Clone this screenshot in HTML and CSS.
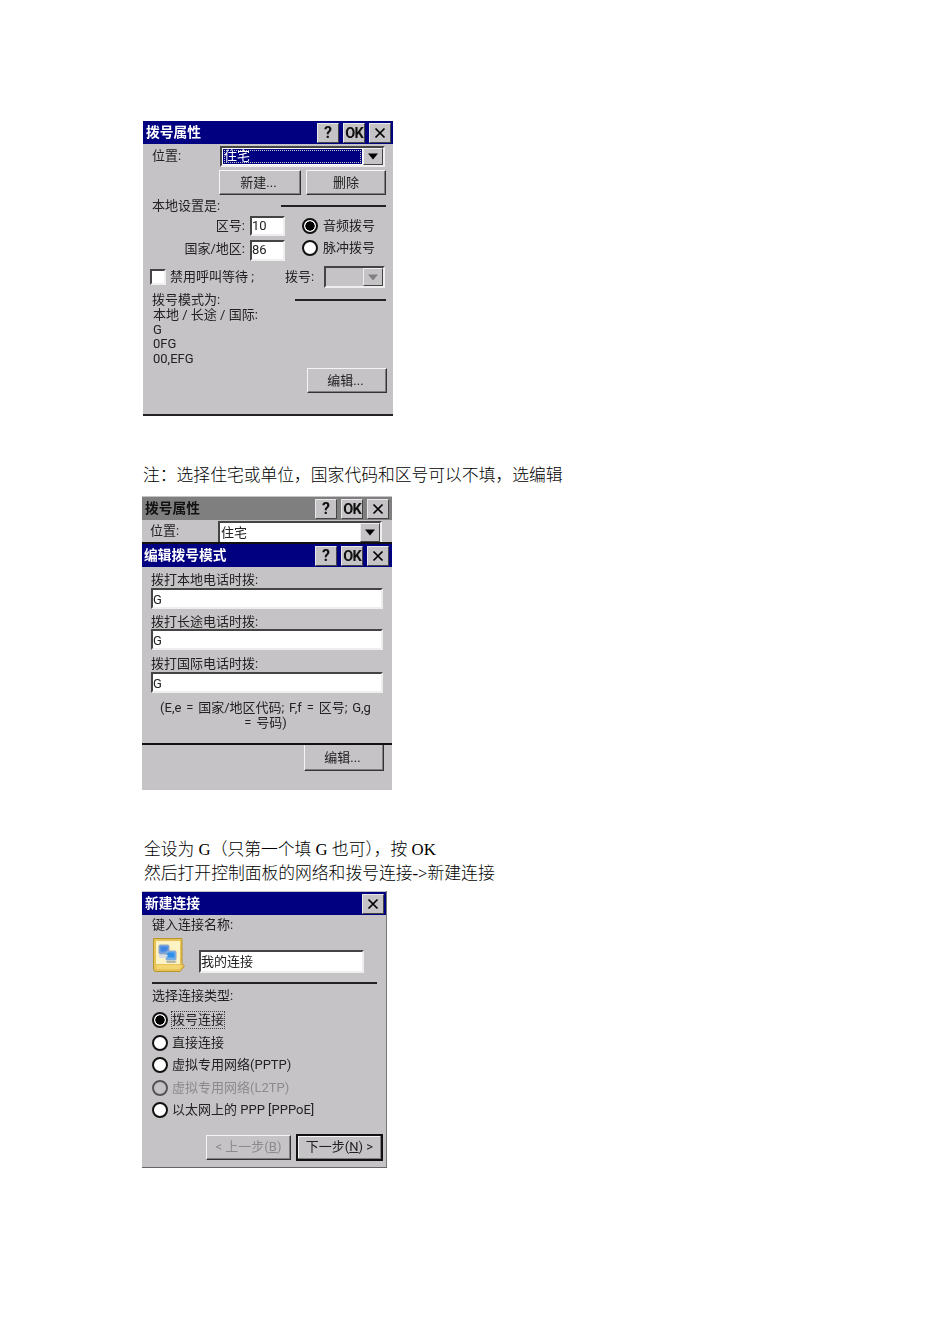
FILE: index.html
```html
<!DOCTYPE html>
<html lang="zh-CN">
<head>
<meta charset="utf-8">
<title>拨号属性</title>
<link rel="stylesheet" href="styles.css">
</head>
<body>
<svg class="defs" width="0" height="0" aria-hidden="true">
  <symbol id="x" viewBox="0 0 12 12"><path d="M1.5 1.5 10.5 10.5M10.5 1.5 1.5 10.5" fill="none" stroke="#000" stroke-width="1.7"/></symbol>
  <symbol id="down" viewBox="0 0 12 7"><path d="M1 0.5H11L6 6.5Z"/></symbol>
</svg>
<main class="page">

  <section class="dlg dlg-a">
    <header class="title navy">
      <span class="title-text">拨号属性</span>
      <span class="tb">?</span><span class="tb ok">OK</span><span class="tb"><svg class="ix"><use href="#x"/></svg></span>
    </header>
    <div class="a-r1">
      <span class="a-lab">位置:</span>
      <div class="combo a-combo">
        <span class="combo-val sel"><span class="sel-in">住宅</span></span>
        <span class="arrow"><svg class="dn"><use href="#down"/></svg></span>
      </div>
    </div>
    <div class="a-r2">
      <span class="btn a-new">新建...</span>
      <span class="btn a-del">删除</span>
    </div>
    <div class="a-head">
      <span>本地设置是:</span><i class="rule a-rule1"></i>
    </div>
    <div class="a-grid">
      <span class="a-right">区号:</span><span class="input a-in">10</span>
      <span class="radio on"></span><span>音频拨号</span>
      <span class="a-right a-up2">国家/地区:</span><span class="input a-in a-in2">86</span>
      <span class="radio a-up"></span><span class="a-up">脉冲拨号</span>
    </div>
    <div class="a-chk">
      <span class="check"></span><span class="a-chk-l">禁用呼叫等待 ;</span>
      <span class="a-dial">拨号:</span>
      <div class="combo a-combo2">
        <span class="combo-val dis"></span>
        <span class="arrow off"><svg class="dn"><use href="#down"/></svg></span>
      </div>
    </div>
    <div class="a-head a-head2">
      <span>拨号模式为:</span><i class="rule a-rule2"></i>
    </div>
    <div class="a-lines">
      <div>本地 / 长途 / 国际:</div><div>G</div><div>0FG</div><div>00,EFG</div>
    </div>
    <div class="a-foot"><span class="btn a-edit">编辑...</span></div>
  </section>

  <p class="para para-1">注&#xFF1A;选择住宅或单位&#xFF0C;国家代码和区号可以不填&#xFF0C;选编辑</p>

  <section class="dlg dlg-b">
    <header class="title gray b-title1">
      <span class="title-text">拨号属性</span>
      <span class="tb">?</span><span class="tb ok">OK</span><span class="tb"><svg class="ix"><use href="#x"/></svg></span>
    </header>
    <div class="b-r1">
      <span class="b-lab">位置:</span>
      <div class="combo b-combo">
        <span class="combo-val">住宅</span>
        <span class="arrow"><svg class="dn"><use href="#down"/></svg></span>
      </div>
    </div>
    <header class="title navy b-title2">
      <span class="title-text">编辑拨号模式</span>
      <span class="tb">?</span><span class="tb ok">OK</span><span class="tb"><svg class="ix"><use href="#x"/></svg></span>
    </header>
    <div class="b-form">
      <label class="b-l">拨打本地电话时拨:</label><span class="input b-in">G</span>
      <label class="b-l b-l2">拨打长途电话时拨:</label><span class="input b-in">G</span>
      <label class="b-l b-l3">拨打国际电话时拨:</label><span class="input b-in">G</span>
      <p class="b-note">(E,e = 国家/地区代码; F,f = 区号; G,g<br>= 号码)</p>
    </div>
    <div class="b-foot"><span class="btn b-edit">编辑...</span></div>
  </section>

  <div class="para para-2">
    <p>全设为 G&#xFF08;只第一个填 G 也可&#xFF09;&#xFF0C;按 OK</p>
    <p>然后打开控制面板的网络和拨号连接-&gt;新建连接</p>
  </div>

  <section class="dlg dlg-c">
    <header class="title navy c-title">
      <span class="title-text">新建连接</span>
      <span class="tb"><svg class="ix"><use href="#x"/></svg></span>
    </header>
    <div class="c-lab">键入连接名称:</div>
    <div class="c-name">
      <svg class="c-icon" viewBox="0 0 32 34">
        <path d="M0.5 0.5H29V26L31.5 28 27 33.5H3Q0.5 33.5 0.5 31Z" fill="#e8c458" stroke="#b8962e"/>
        <path d="M3 3H27V26H3Z" fill="#fdf3c4"/>
        <path d="M3 27H27L29 28.5 26 31H4Z" fill="#f3d672"/>
        <rect x="6" y="7" width="10" height="9" rx="1" fill="#6f9fe0" stroke="#8fa6c6"/>
        <rect x="7.500" y="8.500" width="7" height="5" fill="#3f86e4"/>
        <rect x="13" y="13" width="10" height="9" rx="1" fill="#6fb0ee" stroke="#8fa6c6"/>
        <rect x="14.500" y="14.500" width="7" height="5" fill="#2f8fe8"/>
        <path d="M5 17H15L13 20H7Z" fill="#d4dce6"/>
        <path d="M13 23H24L22 25H14Z" fill="#b4b8a8"/>
      </svg>
      <span class="input c-in">我的连接</span>
    </div>
    <i class="rule c-rule"></i>
    <div class="c-lab c-lab2">选择连接类型:</div>
    <div class="c-list">
      <div class="c-opt"><span class="radio on"></span><span class="focus">拨号连接</span></div>
      <div class="c-opt"><span class="radio"></span><span>直接连接</span></div>
      <div class="c-opt"><span class="radio"></span><span>虚拟专用网络(PPTP)</span></div>
      <div class="c-opt muted"><span class="radio dim"></span><span>虚拟专用网络(L2TP)</span></div>
      <div class="c-opt"><span class="radio"></span><span>以太网上的 PPP [PPPoE]</span></div>
    </div>
    <div class="c-foot">
      <span class="btn c-prev">&lt; 上一步(<u>B</u>)</span>
      <span class="btn c-next">下一步(<u>N</u>) &gt;</span>
    </div>
  </section>

</main>
</body>
</html>
```
FILE: styles.css
```css
* { box-sizing: border-box; }
html, body { margin: 0; background: #fff; }
.defs { position: absolute; }
.page { width: 950px; height: 1344px; padding: 121px 0 0 142px; overflow: hidden; }

p { margin: 0; }
.para { font: 300 16.8px/24px "Liberation Serif", "Noto Sans CJK SC", serif; color: #000; }
.para p, p.para { height: 24px; white-space: nowrap; }
.para-1 { margin-top: 48px; margin-left: 1px; }
.para-2 { margin-top: 48px; margin-left: 2px; }

.dlg {
  background: #c6c3c6; color: #222;
  font: 13px/16px Roboto, "Noto Sans CJK SC", sans-serif;
  white-space: nowrap;
  filter: blur(0.3px);
}
.dlg-a { width: 250px; height: 295px; margin-left: 1px; border-bottom: 2px solid #222; }
.dlg-b { width: 250px; height: 294px; margin-top: 8px; padding-top: 1px; }
.dlg-c { width: 245px; height: 277px; margin-top: 5px; padding-top: 1px; border-right: 1px solid #777; border-bottom: 1px solid #666; }

.title { height: 23px; display: flex; align-items: center; padding: 0 2px 0 3px; gap: 4px; }
.title-text { flex: 1; font-weight: 700; font-size: 13.75px; padding-bottom: 2px; }
.navy { background: #000080; color: #fff; }
.gray { background: #7f7f7f; color: #111; }
.tb {
  width: 22px; height: 20px; display: flex; align-items: center; justify-content: center;
  background: #c6c3c6; color: #111; font-weight: 700; font-size: 16px; line-height: 1;
  border: 1px solid; border-color: #e8e8e8 #444 #444 #e8e8e8;
}
.tb.ok { font-size: 14.5px; line-height: 16px; letter-spacing: -0.8px; padding-top: 2px; }
.ix { width: 12px; height: 12px; }
.dn { width: 12px; height: 7px; fill: #000; }

.btn {
  display: flex; align-items: center; justify-content: center;
  background: #c6c3c6; color: #222;
  border: 1px solid; border-color: #f4f4f4 #333 #333 #f4f4f4;
  box-shadow: inset -1px -1px 0 #808080;
}
.input {
  display: block; background: #fff; color: #222; padding: 2px 0 0 0; line-height: 16px;
  border: 2px solid; border-color: #444 #eee #eee #444;
}
.combo { display: flex; background: #fff; border: 2px solid; border-color: #444 #eee #eee #444; }
.combo-val { flex: 1; min-width: 0; display: flex; align-items: center; padding-left: 1px; }
.sel { background: #000080; color: #fff; margin: 1px; padding: 1px; }
.sel-in { display: flex; align-items: center; flex: 1; align-self: stretch; outline: 1px dotted #c6c3c6; outline-offset: -1px; }
.dis { background: #c6c3c6; }
.arrow {
  width: 20px; display: flex; align-items: center; justify-content: center; background: #c6c3c6;
  border: 1px solid; border-color: #eee #444 #444 #eee;
}
.arrow.off .dn { fill: #808080; }

.rule { display: block; height: 2px; background: #222; }

.radio {
  display: block; width: 16px; height: 16px; border-radius: 50%; background: #fff; border: 2px solid #111;
}
.radio.on { background: radial-gradient(circle, #000 0 4.4px, #fff 4.9px); }
.radio.dim { border-color: #555; background: transparent; }
.check { display: block; width: 16px; height: 16px; background: #fff; border: 2px solid; border-color: #444 #eee #eee #444; }

/* dialog A */
.a-r1 { display: flex; align-items: center; margin-top: 2px; height: 20px; }
.a-lab { width: 77px; padding-left: 9px; }
.a-combo { width: 165px; height: 21px; }
.a-r2 { display: flex; gap: 5px; margin: 4px 0 0 76px; height: 25px; }
.a-new { width: 82px; padding-right: 3px; }
.a-del { width: 80px; }
.a-head { display: flex; justify-content: space-between; align-items: center; height: 16px; margin-top: 3px; padding: 0 7px 0 9px; }
.a-rule1 { width: 105px; }
.a-rule2 { width: 91px; }
.a-head2 { margin-top: 4px; }
.a-grid {
  display: grid; grid-template-columns: 102px 35px 16px auto; column-gap: 5px;
  grid-template-rows: 20px 21px; row-gap: 4px; align-items: center; margin-top: 2px; justify-content: start;
}
.a-grid .radio { margin-left: 12px; }
.a-grid .radio + span { margin-left: 12px; }
.a-up { margin-top: -5px; }
.a-up2 { margin-top: -3px; }
.a-right { text-align: right; }
.a-in { height: 20px; padding-top: 0; }
.a-in2 { height: 21px; padding-top: 0; }
.a-chk { display: flex; align-items: center; height: 22px; margin-top: 5px; padding-left: 7px; }
.a-chk-l { width: 115px; margin-left: 4px; }
.a-dial { width: 39px; }
.a-combo2 { width: 61px; height: 22px; background: #c6c3c6; }
.a-lines { padding-left: 10px; line-height: 14.7px; height: 58px; }
.a-foot { display: flex; justify-content: flex-end; padding-right: 6px; margin-top: 2px; }
.a-edit { width: 80px; height: 25px; padding-right: 3px; }

/* dialog B */
.b-title1, .b-title2 { padding-right: 3px; }
.b-r1 { display: flex; align-items: flex-end; border-bottom: 2px solid #111; height: 24px; }
.b-lab { width: 76px; padding-left: 8px; align-self: center; }
.b-combo { width: 164px; height: 21px; margin-top: 3px; border-bottom: 0; }
.b-title2 { height: 23px; padding-left: 2px; }
.b-form { height: 178px; padding: 5px 9px 0; border-bottom: 2px solid #111; }
.b-l { display: block; height: 16px; }
.b-l + .b-in { margin-bottom: 4px; }
.b-l2 { line-height: 18px; }
.b-l3 { height: 18px; padding-top: 2px; }
.b-in { height: 21px; width: 232px; }
.b-note { text-align: center; line-height: 15px; margin-top: 7px; padding-right: 3px; word-spacing: 1.6px; }
.b-foot { display: flex; justify-content: flex-end; padding-right: 8px; }
.b-edit { width: 80px; height: 26px; border-top: 0; padding: 1px 3px 0 0; }

/* dialog C */
.c-title { padding-right: 2px; }
.c-lab { height: 16px; margin-top: 2px; padding-left: 10px; }
.c-name { display: flex; align-items: flex-end; height: 34px; margin-top: 5px; padding-left: 11px; }
.c-icon { width: 32px; height: 34px; }
.c-in { width: 165px; height: 23px; margin-left: 14px; margin-bottom: -1px; padding-top: 2px; }
.c-rule { width: 225px; margin: 10px 0 0 10px; }
.c-lab2 { margin-top: 4px; }
.c-list { margin-top: 5px; padding-left: 10px; }
.c-opt { display: flex; align-items: center; gap: 4px; height: 22.5px; }
.focus { outline: 1px dotted #444; }
.muted { color: #8b8b8b; }
.c-foot { display: flex; align-items: center; gap: 5px; margin: 12px 0 0 64px; }
.c-prev { width: 85px; height: 25px; color: #8b8b8b; }
.c-next { width: 87px; height: 27px; border: 2px solid #111; box-shadow: inset -1px -1px 0 #808080, inset 1px 1px 0 #f4f4f4; }
```
